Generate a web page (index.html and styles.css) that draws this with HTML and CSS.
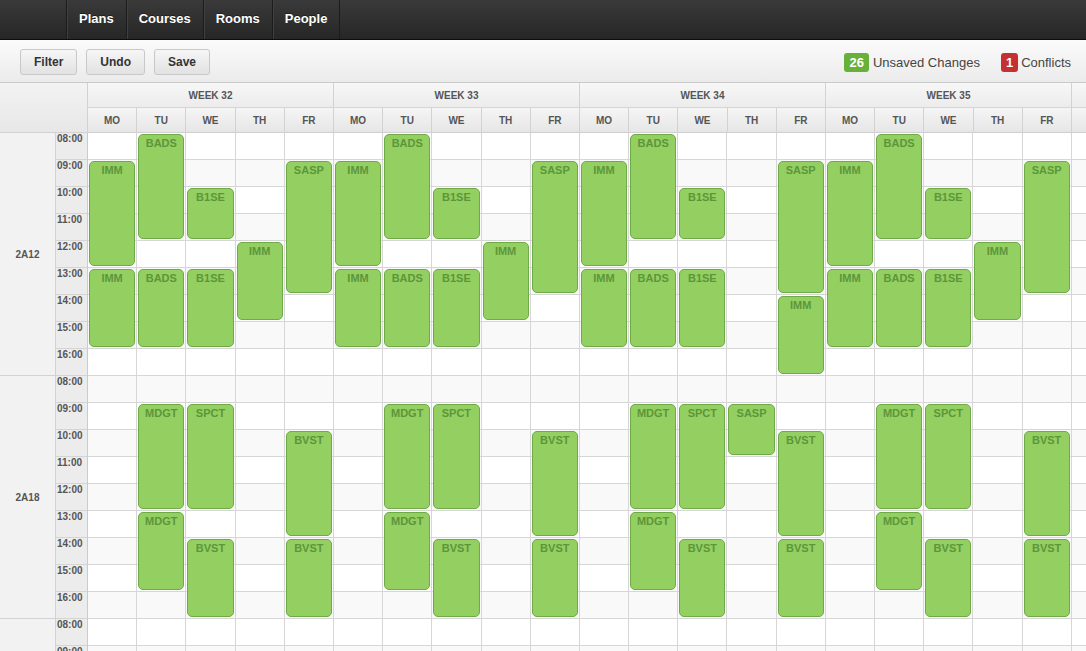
FILE: index.html
```html
<!DOCTYPE html>
<html lang="en">
<head>
<meta charset="utf-8">
<title>Planner</title>
<link rel="stylesheet" href="styles.css">
</head>
<body>
<header class="navbar">
  <nav class="nav">
    <a class="nav-item" href="#">Plans</a>
    <a class="nav-item" href="#">Courses</a>
    <a class="nav-item" href="#">Rooms</a>
    <a class="nav-item" href="#">People</a>
  </nav>
</header>

<div class="toolbar">
  <div class="btns">
    <button class="btn">Filter</button>
    <button class="btn">Undo</button>
    <button class="btn">Save</button>
  </div>
  <div class="status">
    <span class="badge badge-green">26</span><span class="status-text">Unsaved Changes</span>
    <span class="badge badge-red">1</span><span class="status-text">Conflicts</span>
  </div>
</div>

<div class="planner">
  <div class="head">
    <div class="corner"></div>
    <div class="week">
      <div class="week-title">WEEK 32</div>
      <div class="days"><div class="day">MO</div><div class="day">TU</div><div class="day">WE</div><div class="day">TH</div><div class="day">FR</div></div>
    </div>
    <div class="week">
      <div class="week-title">WEEK 33</div>
      <div class="days"><div class="day">MO</div><div class="day">TU</div><div class="day">WE</div><div class="day">TH</div><div class="day">FR</div></div>
    </div>
    <div class="week">
      <div class="week-title">WEEK 34</div>
      <div class="days"><div class="day">MO</div><div class="day">TU</div><div class="day">WE</div><div class="day">TH</div><div class="day">FR</div></div>
    </div>
    <div class="week">
      <div class="week-title">WEEK 35</div>
      <div class="days"><div class="day">MO</div><div class="day">TU</div><div class="day">WE</div><div class="day">TH</div><div class="day">FR</div></div>
    </div>
    <div class="week week-next">
      <div class="week-title"></div>
      <div class="days"><div class="day"></div><div class="day"></div><div class="day"></div><div class="day"></div><div class="day"></div></div>
    </div>
  </div>

  <div class="body">
    <div class="labels">
      <div class="room-group">
        <div class="room">2A12</div>
        <div class="times">
          <div class="time">08:00</div><div class="time">09:00</div><div class="time">10:00</div>
          <div class="time">11:00</div><div class="time">12:00</div><div class="time">13:00</div>
          <div class="time">14:00</div><div class="time">15:00</div><div class="time">16:00</div>
        </div>
      </div>
      <div class="room-group">
        <div class="room">2A18</div>
        <div class="times">
          <div class="time">08:00</div><div class="time">09:00</div><div class="time">10:00</div>
          <div class="time">11:00</div><div class="time">12:00</div><div class="time">13:00</div>
          <div class="time">14:00</div><div class="time">15:00</div><div class="time">16:00</div>
        </div>
      </div>
      <div class="room-group">
        <div class="room"></div>
        <div class="times">
          <div class="time">08:00</div><div class="time">09:00</div>
        </div>
      </div>
    </div>

    <div class="grid">
      <div class="cols">
        <div></div><div></div><div></div><div></div><div></div>
        <div></div><div></div><div></div><div></div><div></div>
        <div></div><div></div><div></div><div></div><div></div>
        <div></div><div></div><div></div><div></div><div></div>
        <div></div><div></div><div></div><div></div><div></div>
      </div>
      <div class="events">
        <!-- 2A12 week 32 -->
        <div class="ev" style="grid-area:2/1/span 4">IMM</div>
        <div class="ev" style="grid-area:6/1/span 3">IMM</div>
        <div class="ev" style="grid-area:1/2/span 4">BADS</div>
        <div class="ev" style="grid-area:6/2/span 3">BADS</div>
        <div class="ev" style="grid-area:3/3/span 2">B1SE</div>
        <div class="ev" style="grid-area:6/3/span 3">B1SE</div>
        <div class="ev" style="grid-area:5/4/span 3">IMM</div>
        <div class="ev" style="grid-area:2/5/span 5">SASP</div>
        <!-- 2A12 week 33 -->
        <div class="ev" style="grid-area:2/6/span 4">IMM</div>
        <div class="ev" style="grid-area:6/6/span 3">IMM</div>
        <div class="ev" style="grid-area:1/7/span 4">BADS</div>
        <div class="ev" style="grid-area:6/7/span 3">BADS</div>
        <div class="ev" style="grid-area:3/8/span 2">B1SE</div>
        <div class="ev" style="grid-area:6/8/span 3">B1SE</div>
        <div class="ev" style="grid-area:5/9/span 3">IMM</div>
        <div class="ev" style="grid-area:2/10/span 5">SASP</div>
        <!-- 2A12 week 34 -->
        <div class="ev" style="grid-area:2/11/span 4">IMM</div>
        <div class="ev" style="grid-area:6/11/span 3">IMM</div>
        <div class="ev" style="grid-area:1/12/span 4">BADS</div>
        <div class="ev" style="grid-area:6/12/span 3">BADS</div>
        <div class="ev" style="grid-area:3/13/span 2">B1SE</div>
        <div class="ev" style="grid-area:6/13/span 3">B1SE</div>
        <div class="ev" style="grid-area:2/15/span 5">SASP</div>
        <div class="ev" style="grid-area:7/15/span 3">IMM</div>
        <!-- 2A12 week 35 -->
        <div class="ev" style="grid-area:2/16/span 4">IMM</div>
        <div class="ev" style="grid-area:6/16/span 3">IMM</div>
        <div class="ev" style="grid-area:1/17/span 4">BADS</div>
        <div class="ev" style="grid-area:6/17/span 3">BADS</div>
        <div class="ev" style="grid-area:3/18/span 2">B1SE</div>
        <div class="ev" style="grid-area:6/18/span 3">B1SE</div>
        <div class="ev" style="grid-area:5/19/span 3">IMM</div>
        <div class="ev" style="grid-area:2/20/span 5">SASP</div>

        <!-- 2A18 week 32 -->
        <div class="ev" style="grid-area:11/2/span 4">MDGT</div>
        <div class="ev" style="grid-area:15/2/span 3">MDGT</div>
        <div class="ev" style="grid-area:11/3/span 4">SPCT</div>
        <div class="ev" style="grid-area:16/3/span 3">BVST</div>
        <div class="ev" style="grid-area:12/5/span 4">BVST</div>
        <div class="ev" style="grid-area:16/5/span 3">BVST</div>
        <!-- 2A18 week 33 -->
        <div class="ev" style="grid-area:11/7/span 4">MDGT</div>
        <div class="ev" style="grid-area:15/7/span 3">MDGT</div>
        <div class="ev" style="grid-area:11/8/span 4">SPCT</div>
        <div class="ev" style="grid-area:16/8/span 3">BVST</div>
        <div class="ev" style="grid-area:12/10/span 4">BVST</div>
        <div class="ev" style="grid-area:16/10/span 3">BVST</div>
        <!-- 2A18 week 34 -->
        <div class="ev" style="grid-area:11/12/span 4">MDGT</div>
        <div class="ev" style="grid-area:15/12/span 3">MDGT</div>
        <div class="ev" style="grid-area:11/13/span 4">SPCT</div>
        <div class="ev" style="grid-area:16/13/span 3">BVST</div>
        <div class="ev" style="grid-area:11/14/span 2">SASP</div>
        <div class="ev" style="grid-area:12/15/span 4">BVST</div>
        <div class="ev" style="grid-area:16/15/span 3">BVST</div>
        <!-- 2A18 week 35 -->
        <div class="ev" style="grid-area:11/17/span 4">MDGT</div>
        <div class="ev" style="grid-area:15/17/span 3">MDGT</div>
        <div class="ev" style="grid-area:11/18/span 4">SPCT</div>
        <div class="ev" style="grid-area:16/18/span 3">BVST</div>
        <div class="ev" style="grid-area:12/20/span 4">BVST</div>
        <div class="ev" style="grid-area:16/20/span 3">BVST</div>
      </div>
    </div>
  </div>
</div>
</body>
</html>
```

FILE: styles.css
```css
* {
  box-sizing: border-box;
  margin: 0;
  padding: 0;
}

html,
body {
  width: 1086px;
  height: 651px;
  overflow: hidden;
}

body {
  font-family: "Liberation Sans", Arial, sans-serif;
  color: #333;
  background: #fff;
}

/* ---------- top navigation ---------- */
.navbar {
  height: 40px;
  background: linear-gradient(#3a3a3a, #262626);
  border-bottom: 1px solid #0c0c0c;
  padding-left: 66px;
  display: flex;
}

.nav {
  display: flex;
}

.nav-item {
  display: flex;
  align-items: center;
  padding: 0 12px 2px;
  border-left: 1px solid #1c1c1c;
  box-shadow: inset 1px 0 0 #404040;
  color: #fff;
  font-size: 13px;
  font-weight: bold;
  text-decoration: none;
  text-shadow: 0 -1px 0 rgba(0, 0, 0, 0.4);
}

.nav-item:last-child {
  border-right: 1px solid #1c1c1c;
}

/* ---------- toolbar ---------- */
.toolbar {
  height: 43px;
  border-bottom: 1px solid #cacaca;
  background: linear-gradient(#fbfbfb, #ebebeb);
  display: flex;
  align-items: center;
  justify-content: space-between;
  padding: 1px 15px 0 20px;
}

.btns {
  display: flex;
  gap: 9px;
}

.btn {
  height: 26px;
  padding: 0 13px;
  border: 1px solid #c8c8c8;
  border-radius: 3px;
  background: linear-gradient(#f6f6f6, #e2e2e2);
  font-family: "Liberation Sans", Arial, sans-serif;
  font-size: 12px;
  font-weight: bold;
  color: #333;
}

.status {
  display: flex;
  align-items: center;
  font-size: 13px;
  color: #444;
  padding-top: 1px;
}

.badge {
  display: inline-block;
  height: 19px;
  line-height: 19px;
  padding: 0 5px;
  border-radius: 3px;
  color: #fff;
  font-size: 13px;
  font-weight: bold;
  margin-right: 4px;
}

.badge-green {
  background: #67b13b;
}

.badge-red {
  background: #c73030;
  margin-left: 21px;
  margin-right: 3px;
}

/* ---------- planner header ---------- */
.head {
  display: flex;
  height: 50px;
}

.corner {
  flex: none;
  width: 88px;
  border-right: 1px solid #d2d2d2;
  border-bottom: 1px solid #d2d2d2;
  background: linear-gradient(#f3f3f3, #e7e7e7);
}

.week {
  flex: none;
  width: 246px;
}

.week-title {
  height: 25px;
  border-right: 1px solid #d2d2d2;
  border-bottom: 1px solid #d6d6d6;
  background: linear-gradient(#f7f7f7, #ececec);
  display: flex;
  align-items: center;
  justify-content: center;
  font-size: 10px;
  font-weight: bold;
  color: #555;
}

.days {
  display: flex;
  height: 25px;
}

.day {
  width: 49.2px;
  flex: none;
  border-right: 1px solid #d2d2d2;
  border-bottom: 1px solid #cfcfcf;
  background: linear-gradient(#f5f5f5, #e6e6e6);
  display: flex;
  align-items: center;
  justify-content: center;
  font-size: 10px;
  font-weight: bold;
  color: #555;
}

/* ---------- planner body ---------- */
.body {
  display: flex;
}

.labels {
  flex: none;
  width: 88px;
}

.room-group {
  display: flex;
  height: 243px;
}

.room {
  width: 56px;
  border-right: 1px solid #d2d2d2;
  border-bottom: 1px solid #d2d2d2;
  background: #f2f2f2;
  display: flex;
  align-items: center;
  justify-content: center;
  font-size: 10px;
  font-weight: bold;
  color: #555;
}

.times {
  width: 32px;
  border-right: 1px solid #cbcbcb;
  background: #ececec;
}

.time {
  height: 27px;
  border-bottom: 1px solid #d4d4d4;
  padding: 0 0 0 1px;
  line-height: 12px;
  font-size: 10px;
  font-weight: bold;
  color: #555;
}

.grid {
  flex: none;
  display: grid;
  background: repeating-linear-gradient(
    to bottom,
    #ffffff 0,
    #ffffff 26px,
    #d6d6d6 26px,
    #d6d6d6 27px,
    #f9f9f9 27px,
    #f9f9f9 53px,
    #d6d6d6 53px,
    #d6d6d6 54px
  );
}

.cols,
.events {
  grid-area: 1 / 1;
}

.cols {
  display: flex;
}

.cols > div {
  flex: none;
  width: 49.2px;
  border-right: 1px solid #d6d6d6;
}

.events {
  display: grid;
  grid-template-columns: repeat(25, 49.2px);
  grid-template-rows: repeat(27, 27px);
}

.ev {
  margin: 1px 2px 2px 1px;
  border: 1px solid #6eab47;
  border-radius: 5px;
  background: #94cf62;
  padding-top: 2px;
  text-align: center;
  font-size: 11px;
  line-height: 13px;
  font-weight: bold;
  color: #5c963a;
}
```
